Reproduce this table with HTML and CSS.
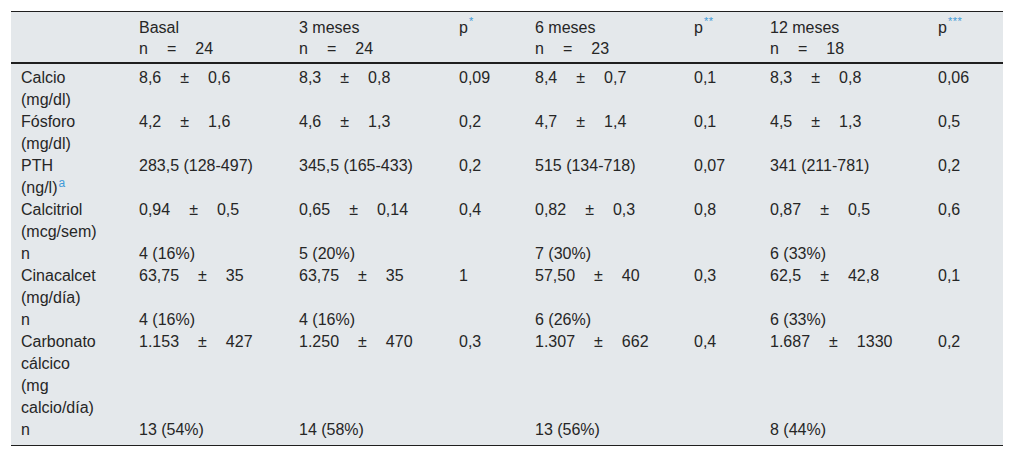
FILE: index.html
```html
<!DOCTYPE html>
<html lang="es">
<head>
<meta charset="utf-8">
<title>Tabla</title>
<link rel="stylesheet" href="styles.css">
</head>
<body>
<div class="wrap">
<table class="data">
<colgroup>
<col class="c-label"><col class="c-val"><col class="c-val"><col class="c-p"><col class="c-val2"><col class="c-p"><col class="c-val3"><col class="c-plast">
</colgroup>
<thead>
<tr>
<th></th>
<th>Basal<br>n<span class="op">=</span>24</th>
<th>3 meses<br>n<span class="op">=</span>24</th>
<th>p<span class="sup">*</span></th>
<th>6 meses<br>n<span class="op">=</span>23</th>
<th>p<span class="sup">**</span></th>
<th>12 meses<br>n<span class="op">=</span>18</th>
<th>p<span class="sup">***</span></th>
</tr>
</thead>
<tbody>
<tr class="first">
<td>Calcio<br>(mg/dl)</td>
<td>8,6<span class="op">±</span>0,6</td>
<td>8,3<span class="op">±</span>0,8</td>
<td>0,09</td>
<td>8,4<span class="op">±</span>0,7</td>
<td>0,1</td>
<td>8,3<span class="op">±</span>0,8</td>
<td>0,06</td>
</tr>
<tr>
<td>Fósforo<br>(mg/dl)</td>
<td>4,2<span class="op">±</span>1,6</td>
<td>4,6<span class="op">±</span>1,3</td>
<td>0,2</td>
<td>4,7<span class="op">±</span>1,4</td>
<td>0,1</td>
<td>4,5<span class="op">±</span>1,3</td>
<td>0,5</td>
</tr>
<tr>
<td>PTH<br>(ng/l)<span class="sup sup-a">a</span></td>
<td>283,5 (128-497)</td>
<td>345,5 (165-433)</td>
<td>0,2</td>
<td>515 (134-718)</td>
<td>0,07</td>
<td>341 (211-781)</td>
<td>0,2</td>
</tr>
<tr>
<td>Calcitriol<br>(mcg/sem)</td>
<td>0,94<span class="op">±</span>0,5</td>
<td>0,65<span class="op">±</span>0,14</td>
<td>0,4</td>
<td>0,82<span class="op">±</span>0,3</td>
<td>0,8</td>
<td>0,87<span class="op">±</span>0,5</td>
<td>0,6</td>
</tr>
<tr>
<td>n</td>
<td>4 (16%)</td>
<td>5 (20%)</td>
<td></td>
<td>7 (30%)</td>
<td></td>
<td>6 (33%)</td>
<td></td>
</tr>
<tr>
<td>Cinacalcet<br>(mg/día)</td>
<td>63,75<span class="op">±</span>35</td>
<td>63,75<span class="op">±</span>35</td>
<td>1</td>
<td>57,50<span class="op">±</span>40</td>
<td>0,3</td>
<td>62,5<span class="op">±</span>42,8</td>
<td>0,1</td>
</tr>
<tr>
<td>n</td>
<td>4 (16%)</td>
<td>4 (16%)</td>
<td></td>
<td>6 (26%)</td>
<td></td>
<td>6 (33%)</td>
<td></td>
</tr>
<tr>
<td>Carbonato<br>cálcico<br>(mg<br>calcio/día)</td>
<td>1.153<span class="op">±</span>427</td>
<td>1.250<span class="op">±</span>470</td>
<td>0,3</td>
<td>1.307<span class="op">±</span>662</td>
<td>0,4</td>
<td>1.687<span class="op">±</span>1330</td>
<td>0,2</td>
</tr>
<tr class="last">
<td>n</td>
<td>13 (54%)</td>
<td>14 (58%)</td>
<td></td>
<td>13 (56%)</td>
<td></td>
<td>8 (44%)</td>
<td></td>
</tr>
</tbody>
</table>
</div>
</body>
</html>
```
FILE: styles.css
```css
html, body {
  margin: 0;
  padding: 0;
  background: #ffffff;
}

body {
  font-family: "Liberation Sans", Arial, sans-serif;
  font-size: 16px;
  color: #262626;
}

.wrap {
  padding: 11px;
}

.data {
  width: 992px;
  table-layout: fixed;
  border-collapse: separate;
  border-spacing: 0;
  background: #e4e8eb;
}

.c-label { width: 118px; }
.c-val { width: 160px; }
.c-p { width: 76px; }
.c-val2 { width: 159px; }
.c-val3 { width: 168px; }
.c-plast { width: 75px; }

.data th,
.data td {
  text-align: left;
  vertical-align: top;
  font-weight: normal;
  padding: 0 0 0 10px;
  white-space: nowrap;
}

.data th {
  line-height: 21px;
  padding-top: 5px;
  padding-bottom: 3px;
  border-top: 1px solid #1f1f1f;
  border-bottom: 2px solid #1f1f1f;
}

.data td {
  line-height: 22px;
}

.data tr.first td {
  padding-top: 3px;
}

.data tr.last td {
  padding-bottom: 4px;
  border-bottom: 1px solid #1f1f1f;
}

.op {
  margin: 0 19px;
}

.sup {
  font-size: 11px;
  line-height: 0;
  vertical-align: 8px;
  color: #3f9ad8;
  margin-left: 1px;
  letter-spacing: 0.5px;
}

.sup-a {
  font-size: 12px;
  vertical-align: 6px;
  margin-left: 1px;
  letter-spacing: 0;
}
```
